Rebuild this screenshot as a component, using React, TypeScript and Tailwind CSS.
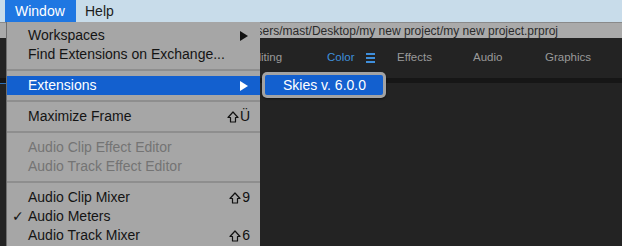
import type { ReactNode } from 'react'

const font = { fontFamily: '"Liberation Sans", "DejaVu Sans", Arial, sans-serif' }

type Item =
  | { kind: 'sep' }
  | {
      kind: 'item'
      label: string
      shortcut?: string
      submenu?: boolean
      disabled?: boolean
      checked?: boolean
      active?: boolean
    }

const items: Item[] = [
  { kind: 'item', label: 'Workspaces', submenu: true },
  { kind: 'item', label: 'Find Extensions on Exchange...' },
  { kind: 'sep' },
  { kind: 'item', label: 'Extensions', submenu: true, active: true },
  { kind: 'sep' },
  { kind: 'item', label: 'Maximize Frame', shortcut: 'Ü' },
  { kind: 'sep' },
  { kind: 'item', label: 'Audio Clip Effect Editor', disabled: true },
  { kind: 'item', label: 'Audio Track Effect Editor', disabled: true },
  { kind: 'sep' },
  { kind: 'item', label: 'Audio Clip Mixer', shortcut: '9' },
  { kind: 'item', label: 'Audio Meters', checked: true },
  { kind: 'item', label: 'Audio Track Mixer', shortcut: '6' },
]

function Arrow({ white }: { white?: boolean }) {
  return (
    <svg width="8" height="10" viewBox="0 0 8 10" className="block">
      <polygon points="0,0 8,5 0,10" fill={white ? '#ffffff' : '#111111'} />
    </svg>
  )
}

function Shortcut({ children }: { children: ReactNode }) {
  return (
    <span className="flex items-center gap-[1px] text-[#111]">
      <svg width="12" height="12" viewBox="0 0 12 12" className="block">
        <path d="M6 1 L11 6.5 H8.5 V11 H3.5 V6.5 H1 Z" fill="none" stroke="#111" strokeWidth="1.2" strokeLinejoin="round" />
      </svg>
      <span>{children}</span>
    </span>
  )
}

function Menu() {
  return (
    <div className="absolute left-[6px] top-[22px] w-[254px] h-[230px] bg-[#a6a6a6] border-l border-[#6f6f6f] pt-1 text-[14px]" style={font}>
      {items.map((item, i) =>
        item.kind === 'sep' ? (
          <div key={i} className="h-[12px] flex items-center">
            <div className="h-[2px] w-full bg-[#8e8e8e]" />
          </div>
        ) : (
          <div
            key={i}
            className={`relative h-[19px] flex items-center pl-[21px] pr-[10px] ${
              item.active ? 'bg-[#1360cf] text-white' : item.disabled ? 'text-[#747474]' : 'text-[#141414]'
            }`}
          >
            {item.checked && <span className="absolute left-[5px] text-[14px] text-[#141414]">✓</span>}
            <span className="flex-1 whitespace-nowrap">{item.label}</span>
            {item.submenu && (
              <span className="pr-[2px]">
                <Arrow white={item.active} />
              </span>
            )}
            {item.shortcut && <Shortcut>{item.shortcut}</Shortcut>}
          </div>
        )
      )}
    </div>
  )
}

function Submenu() {
  return (
    <div className="absolute left-[262px] top-[72px] w-[124px] h-[26px] rounded-[5px] bg-[#a3a3a3] p-[3px] shadow-[0_1px_2px_rgba(0,0,0,0.5)]" style={font}>
      <div className="h-full rounded-[2px] bg-[#1360cf] text-white text-[14px] flex items-center pl-[18px]">
        Skies v. 6.0.0
      </div>
    </div>
  )
}

export default function App() {
  return (
    <div className="relative w-[622px] h-[246px] overflow-hidden bg-[#232323]" style={font}>
      <div className="h-[22px] bg-[#c8dcea] flex items-stretch text-[14px] text-[#1c1c1c]">
        <div className="ml-[5px] w-[71px] bg-[#1f77e2] text-white flex items-center pl-[10px]">Window</div>
        <div className="flex items-center pl-[9px]">Help</div>
      </div>
      <div className="h-[16px] bg-[#aaaaaa] border-t border-[#8a8a8a] flex items-center justify-end pr-[64px] text-[12px] text-[#2a2a2a] whitespace-nowrap">
        /Users/mast/Desktop/my new project/my new project.prproj
      </div>
      <div className="h-[40px] flex items-center pl-[247px] text-[11.5px] text-[#9a9a9a]">
        <span className="w-[80px]">Editing</span>
        <span className="w-[39px] text-[#3f8fdc]">Color</span>
        <span className="w-[31px] flex flex-col gap-[2.5px]">
          <span className="block h-[1.5px] w-[9px] bg-[#3f8fdc]" />
          <span className="block h-[1.5px] w-[9px] bg-[#3f8fdc]" />
          <span className="block h-[1.5px] w-[9px] bg-[#3f8fdc]" />
        </span>
        <span className="w-[76px]">Effects</span>
        <span className="w-[72px]">Audio</span>
        <span>Graphics</span>
      </div>
      <div className="h-[5px] bg-[#161616]" />
      <div className="h-px w-[200px] bg-[#2d6fb8]" />
      <Menu />
      <Submenu />
    </div>
  )
}
